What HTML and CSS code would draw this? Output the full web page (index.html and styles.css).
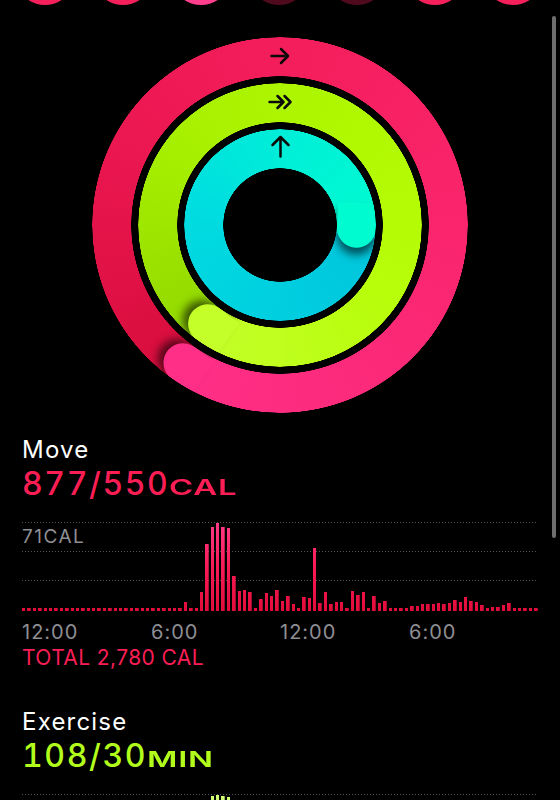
FILE: index.html
```html
<!DOCTYPE html>
<html lang="en">
<head>
    <meta charset="UTF-8">
    <meta name="viewport" content="width=device-width, initial-scale=1.0">
    <title>Activity</title>
    <link rel="stylesheet" href="styles.css">
</head>
<body>
    <div class="week">
        <div class="day"></div>
        <div class="day"></div>
        <div class="day today"></div>
        <div class="day missed"></div>
        <div class="day missed"></div>
        <div class="day"></div>
        <div class="day"></div>
    </div>

    <div class="rings">
        <div class="ring move">
            <svg class="arrow" width="20" height="18" viewBox="0 0 20 18"><path d="M1.5 9H18M11 2L18 9L11 16"/></svg>
            <div class="cap-arm"><div class="cap"></div></div>
        </div>
        <div class="ring exercise">
            <svg class="arrow" width="25" height="18" viewBox="0 0 25 18"><path d="M1.5 9H15.5M9.5 3L15.5 9L9.5 15M16.5 3L22.5 9L16.5 15"/></svg>
            <div class="cap-arm"><div class="cap"></div></div>
        </div>
        <div class="ring stand">
            <svg class="arrow" width="23" height="23" viewBox="0 0 23 23"><path d="M11.5 21.5V2M3.5 10L11.5 2L19.5 10"/></svg>
            <div class="cap-arm"><div class="cap"></div></div>
        </div>
    </div>

    <div class="section move-section">
        <div class="title">Move</div>
        <div class="value">877/550<span class="unit">CAL</span></div>
        <div class="chart">
            <div class="chart-label">71CAL</div>
            <div class="bars" id="moveBars"></div>
        </div>
        <div class="times">
            <span>12:00</span><span>6:00</span><span>12:00</span><span>6:00</span>
        </div>
        <div class="total">TOTAL 2,780 CAL</div>
    </div>

    <div class="section exercise-section">
        <div class="title">Exercise</div>
        <div class="value">108/30<span class="unit">MIN</span></div>
        <div class="chart">
            <div class="chart-label">15 MIN</div>
            <div class="bars" id="exerciseBars"></div>
        </div>
    </div>

    <div class="scrollbar"></div>

    <script>
        // calories per 15 minutes, midnight to midnight
        var moveData = [
            3, 3, 3, 3, 3, 3, 3, 3, 3, 3, 3, 3, 3, 3, 3, 3, 3, 3, 3, 3, 3, 3, 3, 3,
            3, 3, 3, 3, 3, 3, 9, 3, 3, 19, 67, 84, 88, 84, 83, 35, 20, 21, 19, 3, 12, 18, 15, 21,
            10, 15, 7, 3, 14, 13, 63, 8, 19, 7, 9, 9, 3, 20, 16, 19, 3, 15, 8, 10, 3, 3, 3, 3,
            5, 5, 7, 7, 7, 8, 7, 8, 11, 9, 14, 10, 9, 6, 3, 4, 4, 6, 8, 3, 3, 3, 3, 3
        ];

        var exerciseData = [];
        for (var i = 0; i < 96; i++) {
            exerciseData.push(3);
        }
        exerciseData[34] = 30;
        exerciseData[35] = 87;
        exerciseData[36] = 88;
        exerciseData[37] = 87;
        exerciseData[38] = 86;
        exerciseData[39] = 12;

        function drawBars(id, data) {
            var el = document.getElementById(id);
            for (var i = 0; i < data.length; i++) {
                var bar = document.createElement('div');
                bar.className = 'bar';
                bar.style.height = data[i] + 'px';
                el.appendChild(bar);
            }
        }

        drawBars('moveBars', moveData);
        drawBars('exerciseBars', exerciseData);
    </script>
</body>
</html>
```

FILE: styles.css
```css
html, body {
    overflow: hidden;
}
body {
    margin: 0;
    background-color: #000;
    color: #fff;
    font-family: Inter, "Liberation Sans", sans-serif;
}

/* week strip, scrolled mostly off the top */
.week {
    display: flex;
    gap: 18px;
    padding-left: 15px;
    margin-top: -55px;
}
.day {
    width: 60px;
    height: 60px;
    border-radius: 50%;
    border: 12px solid #f4205c;
    box-sizing: border-box;
}
.day.today {
    border-color: #ff3f8e;
}
.day.missed {
    border-color: #4f0a1d;
}

/* activity rings */
.rings {
    display: grid;
    width: 376px;
    height: 376px;
    margin: 32px auto 0;
}
.ring {
    grid-area: 1 / 1;
    place-self: center;
    position: relative;
    display: flex;
    justify-content: center;
    align-items: flex-start;
    border-radius: 50%;
    -webkit-mask: radial-gradient(closest-side, transparent calc(100% - 39.5px), #000 calc(100% - 39px), #000 calc(100% - 0.5px), transparent 100%);
    mask: radial-gradient(closest-side, transparent calc(100% - 39.5px), #000 calc(100% - 39px), #000 calc(100% - 0.5px), transparent 100%);
}
.ring.move {
    width: 376px;
    height: 376px;
    background: conic-gradient(from 215deg, #d80d3d, #ec1852 25%, #f51f5e 45%, #fa2670 70%, #ff2f88);
}
.ring.exercise {
    width: 284px;
    height: 284px;
    background: conic-gradient(from 216deg, #92d800, #a7ef00 25%, #b0f800 50%, #b8fd0a 75%, #c4ff2a);
}
.ring.stand {
    width: 192px;
    height: 192px;
    background: conic-gradient(from 92deg, #00c5dc, #00d1e0 30%, #00dbe0 50%, #00eed8 75%, #00fbd0);
}
.arrow {
    position: relative;
    z-index: 1;
    fill: none;
    stroke: #0a0a0a;
    stroke-width: 2.5;
    stroke-linecap: round;
    stroke-linejoin: round;
}
.move .arrow {
    margin-top: 10px;
}
.exercise .arrow {
    margin-top: 10px;
}
.stand .arrow {
    margin-top: 6px;
}
.cap-arm {
    position: absolute;
    inset: 0;
}
.cap {
    width: 45px;
    height: 39px;
    margin-left: calc(50% - 25px);
    border-radius: 0 19.5px 19.5px 0;
    box-shadow: 7px 0 9px rgba(0, 0, 0, 0.6);
}
.move .cap-arm {
    transform: rotate(215deg);
}
.move .cap {
    background-color: #ff2f88;
}
.exercise .cap-arm {
    transform: rotate(216deg);
}
.exercise .cap {
    background-color: #c4ff2a;
}
.stand .cap-arm {
    transform: rotate(92deg);
}
.stand .cap {
    background-color: #00fbd0;
}

/* sections */
.section {
    padding: 0 22px;
}
.move-section {
    margin-top: 23px;
}
.exercise-section {
    margin-top: 38px;
}
.title {
    font-size: 24px;
    line-height: 28px;
    letter-spacing: 1.2px;
}
.value {
    margin-top: 3px;
    font-size: 32px;
    line-height: 34px;
    font-weight: 500;
    letter-spacing: 1.6px;
    font-variant-numeric: tabular-nums;
}
.unit {
    display: inline-block;
    font-size: 22px;
    font-weight: 600;
    letter-spacing: 0.5px;
    transform: scaleX(1.5);
    transform-origin: left bottom;
}
.move-section .value,
.total {
    color: #fa1e55;
}
.exercise-section .value {
    color: #b2fc1c;
}

/* charts */
.chart {
    display: grid;
    height: 89px;
    margin-top: 18px;
    background-image:
        linear-gradient(to right, #555 1px, transparent 1px),
        linear-gradient(to right, #555 1px, transparent 1px),
        linear-gradient(to right, #555 1px, transparent 1px);
    background-size: 3px 1px;
    background-repeat: repeat-x;
    background-position: 0 0, 0 29px, 0 58px;
}
.chart > * {
    grid-area: 1 / 1;
}
.chart-label {
    align-self: start;
    padding-top: 5px;
    font-size: 19px;
    line-height: 19px;
    color: #8e8e93;
    letter-spacing: 1.5px;
}
.bars {
    display: flex;
    align-items: flex-end;
    gap: 2px;
}
.bar {
    flex: 1;
    background: linear-gradient(to top, #e20d3b, #f81a55 50%, #ff3a86) bottom / 100% 88px no-repeat;
}
.exercise-section .bar {
    background: linear-gradient(to top, #8ed600, #b0f820 50%, #d2ff78) bottom / 100% 88px no-repeat;
}
.times {
    display: grid;
    grid-template-columns: repeat(4, 1fr);
    margin-top: 11px;
    font-size: 20px;
    line-height: 20px;
    color: #8e8e93;
    letter-spacing: 1px;
}
.total {
    margin-top: 4px;
    font-size: 21px;
    line-height: 24px;
    letter-spacing: 0.4px;
}

.scrollbar {
    position: fixed;
    top: 16px;
    right: 4px;
    width: 4px;
    height: 522px;
    border-radius: 2px;
    background-color: #6e6e6e;
}
```
